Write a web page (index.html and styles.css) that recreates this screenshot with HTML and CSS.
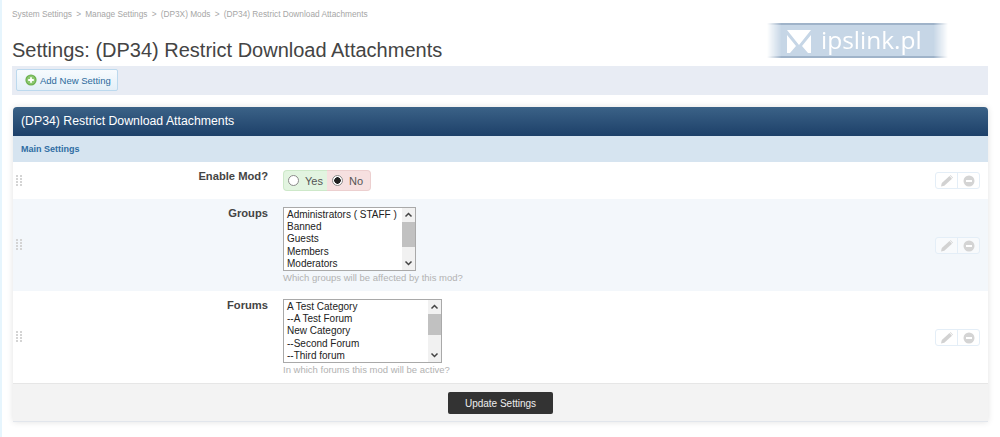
FILE: index.html
```html
<!DOCTYPE html>
<html lang="en">
<head>
<meta charset="utf-8">
<title>Settings</title>
<link rel="stylesheet" href="styles.css">
</head>
<body>
<main class="page">
  <nav class="crumbs"><span>System Settings</span><i>&gt;</i><span>Manage Settings</span><i>&gt;</i><span>(DP3X) Mods</span><i>&gt;</i><span>(DP34) Restrict Download Attachments</span></nav>
  <h1 class="title">Settings: (DP34) Restrict Download Attachments</h1>
  <div class="logo">
    <svg class="logo-mark" width="24" height="24" viewBox="0 0 24 24"><path d="M0 1H24L12 16ZM0 6L9 17 3 24H0ZM24 6V24H21L15 17Z" fill="#fff"/></svg>
    <span class="logo-text">ipslink.pl</span>
  </div>
  <div class="toolbar">
    <a class="add-btn">
      <svg width="12" height="12" viewBox="0 0 12 12"><circle cx="6" cy="6" r="5.6" fill="#6cb04f"/><circle cx="6" cy="6" r="4.4" fill="#8cc870"/><path d="M6 3.2V8.800M3.200 6H8.800" stroke="#fff" stroke-width="1.800"/></svg>
      Add New Setting
    </a>
  </div>
  <section class="panel">
    <header class="panel-head">(DP34) Restrict Download Attachments</header>
    <div class="panel-sub">Main Settings</div>

    <div class="row row-short">
      <svg class="grip" width="6" height="11" viewBox="0 0 6 11"><path d="M0 0h2v2H0zM4 0h2v2H4zM0 3h2v2H0zM4 3h2v2H4zM0 6h2v2H0zM4 6h2v2H4zM0 9h2v2H0zM4 9h2v2H4z" fill="#d4d4d4"/></svg>
      <div class="label">Enable Mod?</div>
      <div class="field">
        <div class="yesno">
          <label class="yes"><input type="radio" name="en"> Yes</label>
          <label class="no"><input type="radio" name="en" checked> No</label>
        </div>
      </div>
      <div class="actions">
        <span class="act"><svg width="14" height="13" viewBox="0 0 14 13"><path d="M1 12.500L1.800 9 9.500 2 12 4.800 4.300 11.800Z" fill="#d2d2d2"/><path d="M10.500 1L13 3.800 12.500 4.300 10 1.500Z" fill="#d2d2d2"/></svg></span>
        <span class="act"><svg width="12" height="12" viewBox="0 0 12 12"><circle cx="6" cy="6" r="5.500" fill="#d4d4d4"/><rect x="3" y="5" width="6" height="2" fill="#fff"/></svg></span>
      </div>
    </div>

    <div class="row row-tall alt">
      <svg class="grip" width="6" height="11" viewBox="0 0 6 11"><path d="M0 0h2v2H0zM4 0h2v2H4zM0 3h2v2H0zM4 3h2v2H4zM0 6h2v2H0zM4 6h2v2H4zM0 9h2v2H0zM4 9h2v2H4z" fill="#d4d4d4"/></svg>
      <div class="label">Groups</div>
      <div class="field">
        <div class="list list-groups" role="listbox">
          <ul class="opts"><li>Administrators ( STAFF )</li><li>Banned</li><li>Guests</li><li>Members</li><li>Moderators</li></ul>
          <div class="sb">
            <svg width="13" height="14" viewBox="0 0 13 14"><path d="M3.500 8.500L6.500 5.500 9.500 8.500" fill="none" stroke="#444" stroke-width="1.500"/></svg>
            <div class="thumb thumb-groups"></div>
            <svg class="sb-down" width="13" height="14" viewBox="0 0 13 14"><path d="M3.500 5.500L6.500 8.500 9.500 5.500" fill="none" stroke="#444" stroke-width="1.500"/></svg>
          </div>
        </div>
        <p class="hint">Which groups will be affected by this mod?</p>
      </div>
      <div class="actions">
        <span class="act"><svg width="14" height="13" viewBox="0 0 14 13"><path d="M1 12.500L1.800 9 9.500 2 12 4.800 4.300 11.800Z" fill="#d2d2d2"/><path d="M10.500 1L13 3.800 12.500 4.300 10 1.500Z" fill="#d2d2d2"/></svg></span>
        <span class="act"><svg width="12" height="12" viewBox="0 0 12 12"><circle cx="6" cy="6" r="5.500" fill="#d4d4d4"/><rect x="3" y="5" width="6" height="2" fill="#fff"/></svg></span>
      </div>
    </div>

    <div class="row row-tall">
      <svg class="grip" width="6" height="11" viewBox="0 0 6 11"><path d="M0 0h2v2H0zM4 0h2v2H4zM0 3h2v2H0zM4 3h2v2H4zM0 6h2v2H0zM4 6h2v2H4zM0 9h2v2H0zM4 9h2v2H4z" fill="#d4d4d4"/></svg>
      <div class="label">Forums</div>
      <div class="field">
        <div class="list list-forums" role="listbox">
          <ul class="opts"><li>A Test Category</li><li>--A Test Forum</li><li>New Category</li><li>--Second Forum</li><li>--Third forum</li></ul>
          <div class="sb">
            <svg width="13" height="14" viewBox="0 0 13 14"><path d="M3.500 8.500L6.500 5.500 9.500 8.500" fill="none" stroke="#444" stroke-width="1.500"/></svg>
            <div class="thumb thumb-forums"></div>
            <svg class="sb-down" width="13" height="14" viewBox="0 0 13 14"><path d="M3.500 5.500L6.500 8.500 9.500 5.500" fill="none" stroke="#444" stroke-width="1.500"/></svg>
          </div>
        </div>
        <p class="hint">In which forums this mod will be active?</p>
      </div>
      <div class="actions">
        <span class="act"><svg width="14" height="13" viewBox="0 0 14 13"><path d="M1 12.500L1.800 9 9.500 2 12 4.800 4.300 11.800Z" fill="#d2d2d2"/><path d="M10.500 1L13 3.800 12.500 4.300 10 1.500Z" fill="#d2d2d2"/></svg></span>
        <span class="act"><svg width="12" height="12" viewBox="0 0 12 12"><circle cx="6" cy="6" r="5.500" fill="#d4d4d4"/><rect x="3" y="5" width="6" height="2" fill="#fff"/></svg></span>
      </div>
    </div>

    <footer class="panel-foot"><button class="save" type="button">Update Settings</button></footer>
  </section>
</main>
</body>
</html>
```
FILE: styles.css
```css
* { box-sizing: border-box; }
html, body { margin: 0; height: 100%; }
body {
  background: #fff;
  font-family: "Liberation Sans", Arial, sans-serif;
  color: #333;
  overflow: hidden;
  border-left: 2px solid #e6f5fd;
}
.page { position: relative; padding: 10px 12px 0 10px; height: 437px; }
.crumbs {
  display: flex;
  gap: 4.200px;
  height: 9px;
  font-size: 8.300px;
  line-height: 9px;
  color: #a6a6a6;
}
.crumbs i { font-style: normal; }
.title {
  margin: 17px 0 2px;
  height: 28px;
  font-size: 20px;
  line-height: 28px;
  font-weight: 400;
  color: #444;
}
.logo {
  position: absolute;
  left: 765px;
  top: 23px;
  width: 181px;
  height: 35px;
  display: flex;
  align-items: center;
  padding-left: 20px;
  gap: 10px;
  background: #c6d6e6;
  border-top: 2px solid #9fb3c9;
  border-bottom: 2px solid #9fb3c9;
  -webkit-mask-image: linear-gradient(90deg, transparent, #000 8%, #000 92%, transparent);
  mask-image: linear-gradient(90deg, transparent, #000 8%, #000 92%, transparent);
}
.logo-text {
  font-family: "Open Sans", sans-serif;
  font-size: 24.500px;
  line-height: 29px;
  padding-bottom: 2px;
  color: #fff;
}
.toolbar {
  height: 29px;
  padding: 3px 4px;
  background: #e8ecf4;
}
.add-btn {
  display: inline-flex;
  align-items: center;
  gap: 3px;
  width: 102px;
  height: 22px;
  padding-left: 8px;
  border: 1px solid #bcd9ee;
  border-radius: 2px;
  background: linear-gradient(#f7fbfe, #e3eff8);
  font-size: 9.500px;
  color: #2c6a9c;
}
.panel {
  margin-top: 12px;
  margin-left: 1px;
  border-radius: 4px 4px 0 0;
  box-shadow: 0 0 6px rgba(0, 0, 0, .12);
  border-bottom: 1px solid #e2e6ec;
}
.panel-head {
  height: 29px;
  padding-left: 8px;
  border-radius: 4px 4px 0 0;
  background: linear-gradient(#3b6287, #1d4069);
  color: #fff;
  font-size: 12.300px;
  line-height: 28px;
}
.panel-sub {
  height: 26px;
  padding-left: 8px;
  background: #d6e4f0;
  color: #2f6da3;
  font-size: 9px;
  font-weight: 700;
  line-height: 26px;
}
.row { display: flex; align-items: flex-start; background: #fff; position: relative; }
.row-short { height: 37px; }
.row-tall { height: 92px; }
.alt { background: #f3f7fb; }
.grip { flex: none; margin: 13px 0 0 3px; }
.row-tall .grip { margin-top: 40px; }
.label {
  flex: none;
  width: 246px;
  margin-top: 8px;
  text-align: right;
  font-size: 11.200px;
  line-height: 13px;
  font-weight: 700;
  color: #444;
}
.field { flex: 1; margin-left: 15px; }
.row-short .field { margin-top: 8px; }
.row-tall .field { margin-top: 8px; }
.yesno { display: flex; width: 88px; height: 21px; font-size: 11px; color: #555; }
.yesno label { display: flex; align-items: center; gap: 6px; height: 21px; }
.yesno input {
  appearance: none;
  margin: 0;
  width: 11px;
  height: 11px;
  border: 1px solid #8a8a8a;
  border-radius: 50%;
  background: #fff;
}
.yesno input:checked { background: radial-gradient(circle, #222 0 3px, #fff 3.500px); }
.yes {
  width: 44px;
  padding-left: 4px;
  background: #e2f4e0;
  border: 1px solid #cde8c9;
  border-right: 0;
  border-radius: 4px 0 0 4px;
}
.no {
  width: 44px;
  padding-left: 5px;
  background: #f6e0e0;
  border: 1px solid #eccfcf;
  border-left: 0;
  border-radius: 0 4px 4px 0;
}
.list {
  display: flex;
  height: 64px;
  background: #fff;
  border: 1px solid #a9a9a9;
  font-size: 10px;
  color: #222;
}
.list-groups { width: 133px; }
.list-forums { width: 159px; }
.opts { flex: 1; margin: 0; padding: 1px 3px; list-style: none; line-height: 12.200px; white-space: nowrap; }
.sb {
  flex: none;
  width: 13px;
  display: flex;
  flex-direction: column;
  background: #f1f1f1;
}
.sb svg { flex: none; }
.sb-down { margin-top: auto; }
.thumb { flex: none; background: #c1c1c1; }
.thumb-groups { height: 25px; }
.thumb-forums { height: 21px; }
.hint {
  margin: 1px 0 0;
  font-size: 9.500px;
  line-height: 11px;
  color: #b2b2b2;
}
.actions {
  flex: none;
  display: flex;
  position: absolute;
  right: 8px;
  top: 10px;
  height: 17px;
  border: 1px solid #e4eef7;
  border-radius: 3px;
  background: rgba(255, 255, 255, .4);
}
.row-tall .actions { top: 38px; }
.act {
  width: 22px;
  display: flex;
  align-items: center;
  justify-content: center;
}
.act:first-child { width: 21px; }
.act + .act { border-left: 1px solid #e4eef7; }
.panel-foot {
  height: 38px;
  display: flex;
  justify-content: center;
  align-items: flex-start;
  padding-top: 8px;
  background: #f3f3f3;
  border-top: 1px solid #e6e6e6;
}
.save {
  width: 105px;
  height: 22px;
  padding: 0;
  border: 0;
  border-radius: 2px;
  background: #333;
  color: #eee;
  font-family: inherit;
  font-size: 10px;
}
```
